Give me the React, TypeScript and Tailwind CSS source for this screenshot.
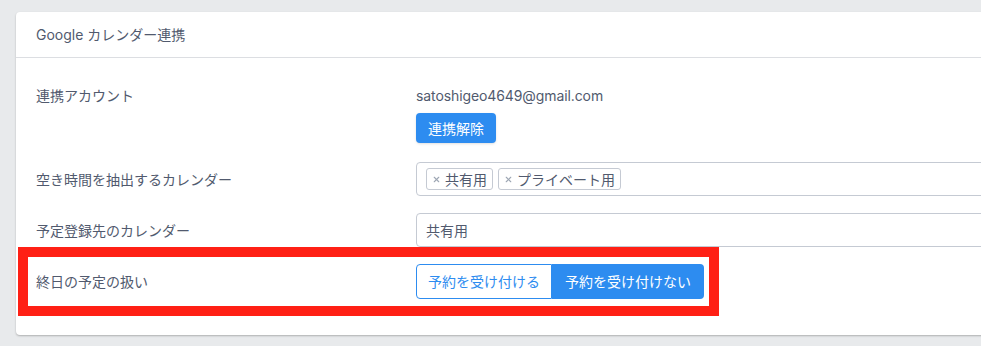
import { X } from 'lucide-react';

const font = { fontFamily: 'Inter, "Noto Sans CJK JP", sans-serif' };

function Tag({ label }: { label: string }) {
  return (
    <span className="flex items-center gap-[4px] h-[22px] px-[5px] border border-[#c5cad3] rounded-[3px] bg-white text-[14px] text-[#515a6e]">
      <X className="h-[9px] w-[9px] text-[#9ea7b4]" strokeWidth={3} />
      <span>{label}</span>
    </span>
  );
}

function Row({ label, children, className = '' }: { label: string; children: React.ReactNode; className?: string }) {
  return (
    <div className={`flex items-center ${className}`}>
      <div className="w-[380px] shrink-0 text-[14px] text-[#515a6e]">{label}</div>
      <div className="flex-1">{children}</div>
    </div>
  );
}

export default function App() {
  return (
    <div className="relative w-[981px] h-[346px] overflow-hidden bg-[#e8eaec]" style={font}>
      <div className="ml-4 mt-3 w-[1100px] h-[323px] bg-white rounded-[4px] shadow-[0_1px_2px_rgba(0,0,0,0.25)]">
        {/* Header */}
        <div className="h-[46px] flex items-center px-5 border-b border-[#dcdee2] text-[14px] text-[#515a6e]">
          Google カレンダー連携
        </div>

        {/* Body */}
        <div className="px-5 pt-[28px]">
          <div className="flex">
            <div className="w-[380px] shrink-0 h-[20px] leading-[20px] text-[14px] text-[#515a6e]">連携アカウント</div>
            <div>
              <div className="h-[20px] leading-[20px] text-[14px] tracking-[-0.1px] text-[#515a6e]">satoshigeo4649@gmail.com</div>
              <button className="mt-[7px] h-[30px] px-3 rounded-[4px] bg-[#2d8cf0] text-white text-[14px] shadow-sm">
                連携解除
              </button>
            </div>
          </div>

          <Row label="空き時間を抽出するカレンダー" className="mt-[19px]">
            <div className="h-[34px] border border-[#c5cad3] rounded-[4px] flex items-center gap-[5px] pl-[9px]">
              <Tag label="共有用" />
              <Tag label="プライベート用" />
            </div>
          </Row>

          <Row label="予定登録先のカレンダー" className="mt-[17px]">
            <div className="h-[34px] border border-[#c5cad3] rounded-[4px] flex items-center pl-[9px] text-[14px] text-[#515a6e]">
              共有用
            </div>
          </Row>

          <Row label="終日の予定の扱い" className="mt-[17px]">
            <div className="flex h-[35px] text-[14px]">
              <button className="w-[136px] h-full border border-[#2d8cf0] rounded-l-[4px] bg-white text-[#2d8cf0]">
                予約を受け付ける
              </button>
              <button className="w-[152px] h-full rounded-r-[4px] bg-[#2d8cf0] text-white">
                予約を受け付けない
              </button>
            </div>
          </Row>
        </div>
      </div>

      {/* Annotation highlight */}
      <div className="absolute left-[18px] top-[247px] w-[701px] h-[69px] border-[10px] border-[#ff2015]" />
    </div>
  );
}
